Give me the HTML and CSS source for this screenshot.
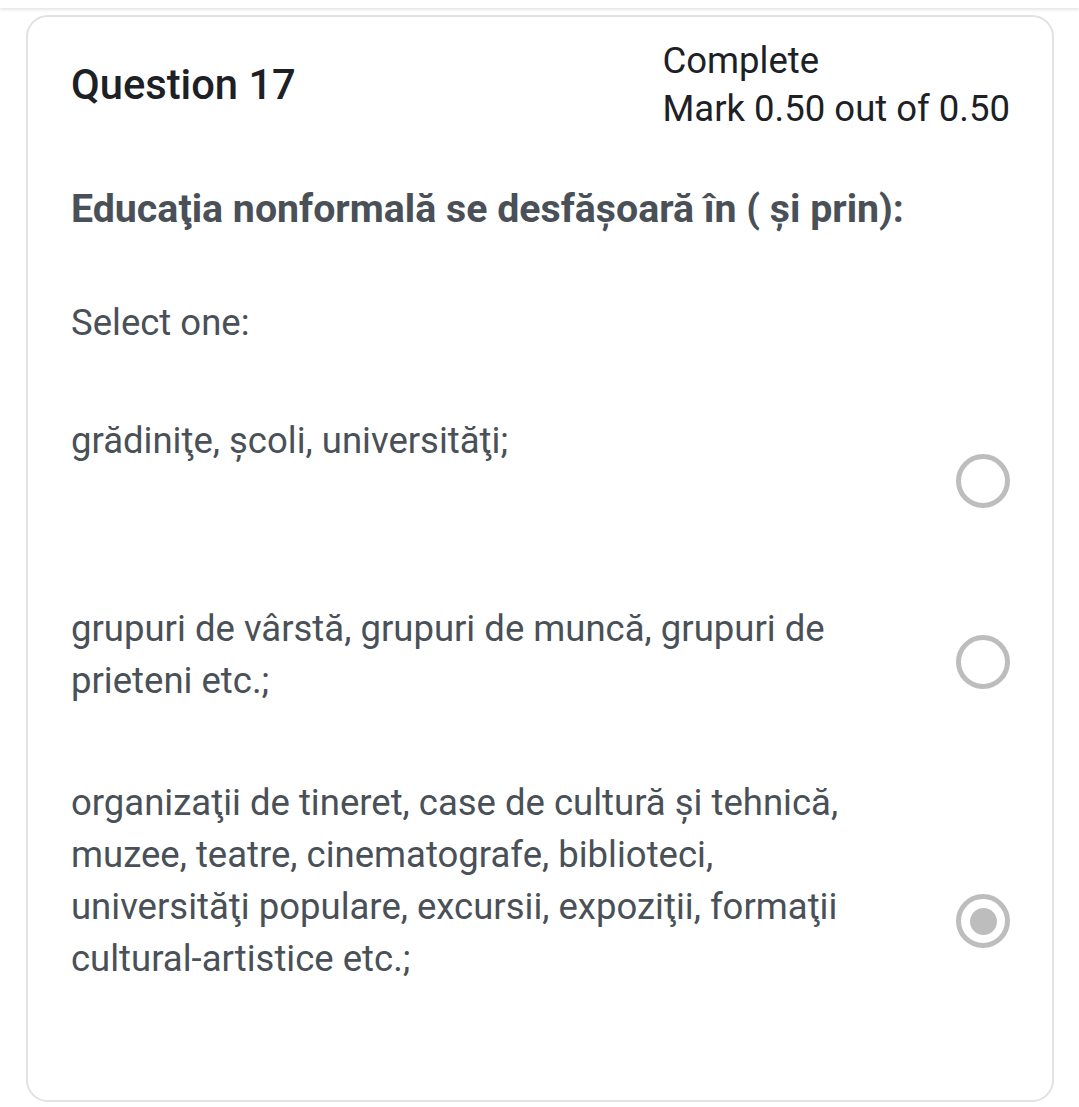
FILE: index.html
```html
<!DOCTYPE html>
<html lang="ro">
<head>
<meta charset="utf-8">
<title>Question 17</title>
<link rel="stylesheet" href="styles.css">
</head>
<body>
<div class="topbar"></div>
<div class="card">
  <div class="qhead">
    <h3 class="qno">Question 17</h3>
    <div class="qinfo">
      <div>Complete</div>
      <div>Mark 0.50 out of 0.50</div>
    </div>
  </div>
  <p class="qtext">Educaţia nonformală se desfăşoară în ( şi prin):</p>
  <div class="prompt">Select one:</div>
  <div class="answers">
    <div class="opt opt-a">
      <div class="label">grădiniţe, şcoli, universităţi;</div>
      <span class="radio"></span>
    </div>
    <div class="opt opt-b">
      <div class="label">grupuri de vârstă, grupuri de muncă, grupuri de prieteni etc.;</div>
      <span class="radio"></span>
    </div>
    <div class="opt opt-c">
      <div class="label">organizaţii de tineret, case de cultură şi tehnică, muzee, teatre, cinematografe, biblioteci, universităţi populare, excursii, expoziţii, formaţii cultural-artistice etc.;</div>
      <span class="radio checked"></span>
    </div>
  </div>
</div>
</body>
</html>
```
FILE: styles.css
```css
* { box-sizing: border-box; }
html, body { margin: 0; padding: 0; background: #fff; }
body {
  font-family: Roboto, "Noto Sans", "Liberation Sans", sans-serif;
  color: #495057;
  width: 1079px;
  height: 1107px;
  overflow: hidden;
}
.topbar {
  height: 8px;
  background: #fff;
  box-shadow: 0 2px 3px rgba(0,0,0,0.10);
}
.card {
  margin: 7px 25px 0 26px;
  height: 1087px;
  border: 2px solid #e2e2e2;
  border-radius: 22px;
  padding: 20px 42px 0 43px;
}
.qhead {
  display: flex;
  justify-content: space-between;
  align-items: center;
}
.qno {
  margin: 0;
  font-size: 41.7px;
  font-weight: 500;
  line-height: 52px;
  color: #1d2125;
}
.qinfo {
  font-size: 36.5px;
  line-height: 48px;
  color: #1d2125;
}
.qtext {
  margin: 49px 0 0;
  font-size: 39.3px;
  font-weight: 700;
  line-height: 54px;
  color: #495057;
}
.prompt {
  margin-top: 61px;
  font-size: 36.5px;
  line-height: 52px;
}
.answers { margin-top: 66px; }
.opt {
  display: flex;
  justify-content: space-between;
  align-items: flex-start;
  font-size: 36.5px;
  line-height: 52px;
}
.label { width: 778px; }
.opt-b { margin-top: 95px; }
.opt-c { margin-top: 70px; }
.radio {
  flex: none;
  width: 54px;
  height: 54px;
  border-radius: 50%;
  border: 5px solid #bdbdbd;
  display: flex;
  align-items: center;
  justify-content: center;
}
.opt-a .radio { margin-top: 39px; }
.opt-b .radio { margin-top: 32px; }
.opt-c .radio { margin-top: 117px; }
.radio.checked::after {
  content: "";
  width: 27px;
  height: 27px;
  border-radius: 50%;
  background: #bdbdbd;
}
```
